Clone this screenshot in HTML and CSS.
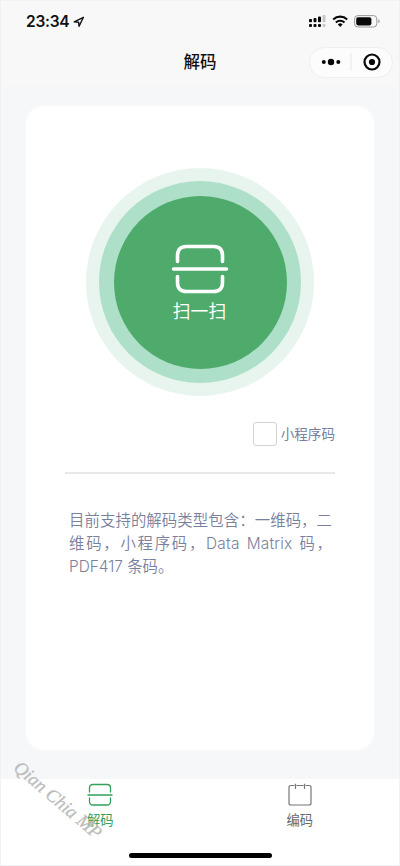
FILE: index.html
```html
<!DOCTYPE html>
<html lang="zh-CN">
<head>
<meta charset="utf-8">
<title>解码</title>
<link rel="stylesheet" href="styles.css">
</head>
<body>
<div class="app">
  <header class="header">
    <div class="status">
      <span class="time">23:34</span>
      <svg class="location" width="12" height="12" viewBox="0 0 12 12"><path d="M1.2 5.8 10.4 1.3 6.1 10.3 5.6 6.3Z" fill="none" stroke="#111" stroke-width="1.4" stroke-linejoin="round"/></svg>
      <svg class="indicators" width="74" height="16" viewBox="0 0 74 16">
        <g fill="#080808">
          <rect x="1" y="5" width="3" height="3.3" rx="1"/><rect x="5.5" y="4" width="3" height="4.3" rx="1"/><rect x="10" y="2.5" width="3" height="5.8" rx="1"/>
          <rect x="1" y="10" width="3" height="3" rx="1"/><rect x="5.5" y="10" width="3" height="3" rx="1"/><rect x="10" y="10" width="3" height="3" rx="1"/>
        </g>
        <g fill="#c6c6c6"><rect x="14.5" y="1" width="3" height="7.3" rx="1"/><rect x="14.5" y="10" width="3" height="3" rx="1"/></g>
        <g fill="none" stroke="#080808" stroke-width="2.1"><path d="M25.2 5.4a10.2 10.2 0 0 1 14 0"/><path d="M27.9 8.5a6.2 6.2 0 0 1 8.6 0"/></g>
        <path d="M29.8 10.5a3.5 3.5 0 0 1 4.8 0L32.2 13Z" fill="#080808"/>
        <rect x="46.6" y="1.6" width="22.2" height="11.4" rx="3.3" fill="none" stroke="#999" stroke-width="1"/>
        <rect x="48.2" y="3.2" width="15.2" height="8.2" rx="1.8" fill="#080808"/>
        <path d="M70.3 5.3v4c1.9-.8 1.9-3.2 0-4Z" fill="#999"/>
      </svg>
    </div>
    <div class="nav">
      <h1 class="title">解码</h1>
      <div class="capsule">
        <svg width="82" height="29" viewBox="0 0 82 29">
          <g fill="#080808"><circle cx="13.8" cy="14" r="2"/><circle cx="21" cy="14" r="3.2"/><circle cx="28.3" cy="14" r="2"/></g>
          <path d="M41 5v18" stroke="#e7e7e7" stroke-width="1"/>
          <circle cx="62" cy="14" r="7.5" fill="none" stroke="#080808" stroke-width="2.2"/><circle cx="62" cy="14" r="3.1" fill="#080808"/>
        </svg>
      </div>
    </div>
  </header>

  <main class="content">
    <section class="card">
      <div class="halo"><div class="ring"><div class="scan">
        <svg width="58" height="50" viewBox="0 0 58 50" fill="none" stroke="#fff" stroke-width="3.6" stroke-linecap="round">
          <path d="M6.5 17.5V11.5Q6.5 2.5 15.5 2.5H42.5Q51.5 2.5 51.5 11.5V17.5M2.5 25H55.5M6.5 32.5V38.5Q6.5 47.5 15.5 47.5H42.5Q51.5 47.5 51.5 38.5V32.5"/>
        </svg>
        <span class="scan-label">扫一扫</span>
      </div></div></div>
      <div class="option"><span class="box"></span><span class="option-label">小程序码</span></div>
      <div class="note">
        <div class="line">目前支持的解码类型包含：一维码，二</div>
        <div class="line wide">维码，小程序码，<span class="latin">Data Matrix</span> 码，</div>
        <div class="line last">PDF417 条码。</div>
      </div>
    </section>
  </main>

  <footer class="footer">
    <nav class="tabs">
      <div class="tab active">
        <svg width="26" height="24" viewBox="0 0 26 24" fill="none" stroke="#32a05a" stroke-width="1.3" stroke-linecap="round"><path d="M2.5 9V5Q2.5 1.5 6 1.5H20Q23.5 1.5 23.5 5V9M1 12H25M2.5 15V18.5Q2.5 22 6 22H20Q23.5 22 23.5 18.5V15"/></svg>
        <span>解码</span>
      </div>
      <div class="tab">
        <svg width="26" height="24" viewBox="0 0 26 24" fill="none" stroke="#777" stroke-width="1.2"><path d="M7.5 2.5H4Q2 2.5 2 4.5V20Q2 22 4 22H22Q24 22 24 20V4.5Q24 2.5 22 2.5H18.5M9.5 2.5H16.5M8.5 .7V6M17.5 .7V6"/></svg>
        <span>编码</span>
      </div>
    </nav>
    <div class="home"></div>
  </footer>
  <div class="watermark">Qian Chia MP</div>
</div>
</body>
</html>
```
FILE: styles.css
```css
* { box-sizing: border-box; }
body { margin: 0; font-family: Inter, "Noto Sans CJK SC", sans-serif; }
.app {
  position: relative;
  display: flex;
  flex-direction: column;
  width: 400px;
  height: 866px;
  overflow: hidden;
  border: 1px solid #f0f1f2;
  background: #f6f7f9;
}
.header { height: 84px; background: #f8f8f8; }
.status { display: flex; align-items: center; height: 42px; padding: 0 17px 0 25px; }
.time { font-size: 15.5px; font-weight: 600; line-height: 20px; letter-spacing: -0.25px; color: #111; }
.location { margin-left: 4px; }
.indicators { margin-left: auto; }
.nav { display: grid; grid-template-columns: 1fr auto 1fr; align-items: center; height: 38px; }
.title { grid-column: 2; margin: 0; font-size: 16.5px; font-weight: 500; line-height: 24px; color: #111; }
.capsule {
  justify-self: end;
  width: 84px;
  height: 31px;
  margin-right: 6px;
  border: 1px solid #efefef;
  border-radius: 16px;
  background: #fcfcfc;
}
.capsule svg { display: block; }
.content { flex: 1; padding: 21px 25px 29px; }
.card { display: flex; flex-direction: column; height: 644px; padding: 62px 39px 0; border-radius: 17px; background: #fff; }
.halo, .ring, .scan { display: flex; align-items: center; justify-content: center; border-radius: 50%; }
.halo { align-self: center; width: 228px; height: 228px; background: #e8f5ee; }
.ring { width: 202px; height: 202px; background: #aee0c9; }
.scan { flex-direction: column; width: 173px; height: 173px; padding: 3px 1px 0 0; background: #4eab6b; color: #fff; }
.scan-label { margin-top: 6px; font-size: 17.8px; line-height: 24px; }
.option {
  display: flex;
  align-items: center;
  justify-content: flex-end;
  gap: 4px;
  height: 78px;
  border-bottom: 2px solid #e7e7e7;
  color: #797f9d;
  font-size: 13.6px;
}
.option-label { line-height: 18px; }
.box { width: 24px; height: 24px; border: 1.5px solid #d3d3d3; border-radius: 3px; }
.note { margin: 35px 3px 0 4px; font-size: 15.4px; line-height: 23.2px; color: #797f9d; font-weight: 350; }
.line { text-align: justify; text-align-last: justify; white-space: nowrap; }
.wide { word-spacing: 1px; }
.latin { letter-spacing: 0.2px; }
.last { text-align-last: left; }
.footer { display: flex; flex-direction: column; align-items: center; height: 86px; background: #fff; }
.tabs { display: flex; width: 100%; height: 74px; }
.tab { display: flex; flex: 1; flex-direction: column; align-items: center; padding-top: 4px; color: #686868; font-size: 13.3px; line-height: 20px; }
.tab span { margin-top: 3px; }
.active { padding-right: 1px; color: #32a05a; }
.home { width: 143px; height: 5px; border-radius: 3px; background: #000; }
.watermark {
  position: absolute;
  left: 22px;
  top: 756px;
  transform: rotate(40.5deg);
  transform-origin: left top;
  font: italic 18.5px/20px "Liberation Serif", serif;
  -webkit-text-stroke: 0.3px #bcbcbc;
  color: #bcbcbc;
  white-space: nowrap;
}
```
